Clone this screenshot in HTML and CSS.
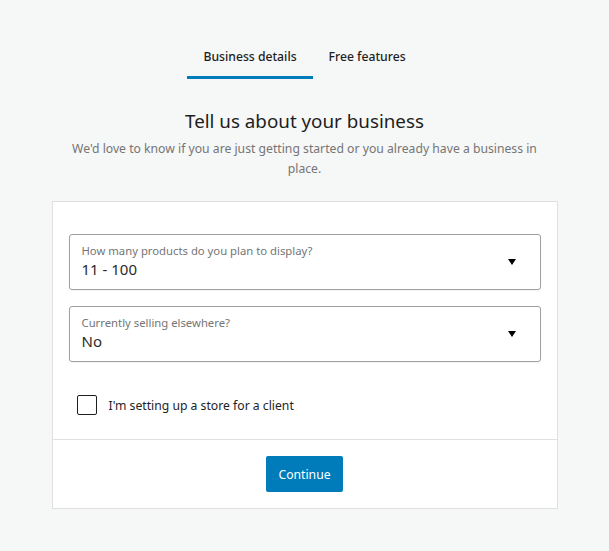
FILE: index.html
```html
<!DOCTYPE html>
<html>
<head>
<meta charset="utf-8">
<link rel="stylesheet" href="styles.css">
</head>
<body>
<div class="page">
  <nav class="tabs">
    <div class="tab active">Business details</div>
    <div class="tab">Free features</div>
  </nav>
  <h1 class="title">Tell us about your business</h1>
  <p class="subtitle">We'd love to know if you are just getting started or you already have a business in place.</p>
  <div class="card">
    <div class="card-body">
      <div class="select">
        <div class="select-text">
          <div class="select-label">How many products do you plan to display?</div>
          <div class="select-value">11 - 100</div>
        </div>
        <span class="arrow"></span>
      </div>
      <div class="select">
        <div class="select-text">
          <div class="select-label">Currently selling elsewhere?</div>
          <div class="select-value">No</div>
        </div>
        <span class="arrow"></span>
      </div>
      <label class="check">
        <span class="box"></span>
        <span class="check-label">I'm setting up a store for a client</span>
      </label>
    </div>
    <div class="card-footer">
      <button class="btn">Continue</button>
    </div>
  </div>
</div>
</body>
</html>
```

FILE: styles.css
```css
html, body {
  margin: 0;
  padding: 0;
  background: #f6f7f7;
}
body {
  font-family: "Noto Sans", "Open Sans", sans-serif;
  color: #1e1e1e;
}
.page {
  width: 506px;
  margin: 0 auto;
  padding-top: 40px;
  display: flex;
  flex-direction: column;
  align-items: center;
}
.tabs {
  display: flex;
  justify-content: center;
}
.tab {
  font-size: 12.2px;
  font-weight: 500;
  padding: 8px 16px 11px;
  border-bottom: 3px solid transparent;
  color: #1e1e1e;
}
.tab.active {
  border-bottom-color: #007cba;
}
.title {
  font-size: 18.8px;
  font-weight: 400;
  margin: 28px 0 0;
  line-height: 28px;
}
.subtitle {
  font-size: 12.2px;
  color: #757575;
  line-height: 20px;
  margin: 4px 0 0;
  text-align: center;
  width: 480px;
}
.card {
  margin-top: 22px;
  width: 506px;
  background: #fff;
  border: 1px solid #e0e0e0;
  box-sizing: border-box;
}
.card-body {
  padding: 32px 16px 24px;
  display: flex;
  flex-direction: column;
  gap: 16px;
}
.select {
  height: 56px;
  box-sizing: border-box;
  border: 1px solid #a0a0a0;
  border-radius: 3px;
  display: flex;
  align-items: center;
  padding: 0 24px 0 12px;
  box-shadow: 0 1px 2px rgba(0,0,0,0.05);
}
.select-text {
  flex: 1;
  margin-top: -3px;
}
.select-label {
  font-size: 11.3px;
  color: #757575;
  line-height: 16px;
}
.select-value {
  font-size: 15px;
  line-height: 20px;
  color: #2b2b2b;
}
.arrow {
  width: 0;
  height: 0;
  border-left: 4px solid transparent;
  border-right: 4px solid transparent;
  border-top: 6px solid #000;
}
.check {
  display: flex;
  align-items: center;
  gap: 12px;
  margin-top: 17px;
  padding-left: 8px;
}
.box {
  width: 20px;
  height: 20px;
  box-sizing: border-box;
  border: 1px solid #1e1e1e;
  border-radius: 2px;
}
.check-label {
  font-size: 12.2px;
  color: #1e1e1e;
}
.card-footer {
  border-top: 1px solid #e0e0e0;
  padding: 16px;
  display: flex;
  justify-content: center;
}
.btn {
  font-family: inherit;
  font-size: 12.2px;
  background: #007cba;
  color: #fff;
  border: none;
  border-radius: 2px;
  height: 36px;
  padding: 0 12px;
}
```
